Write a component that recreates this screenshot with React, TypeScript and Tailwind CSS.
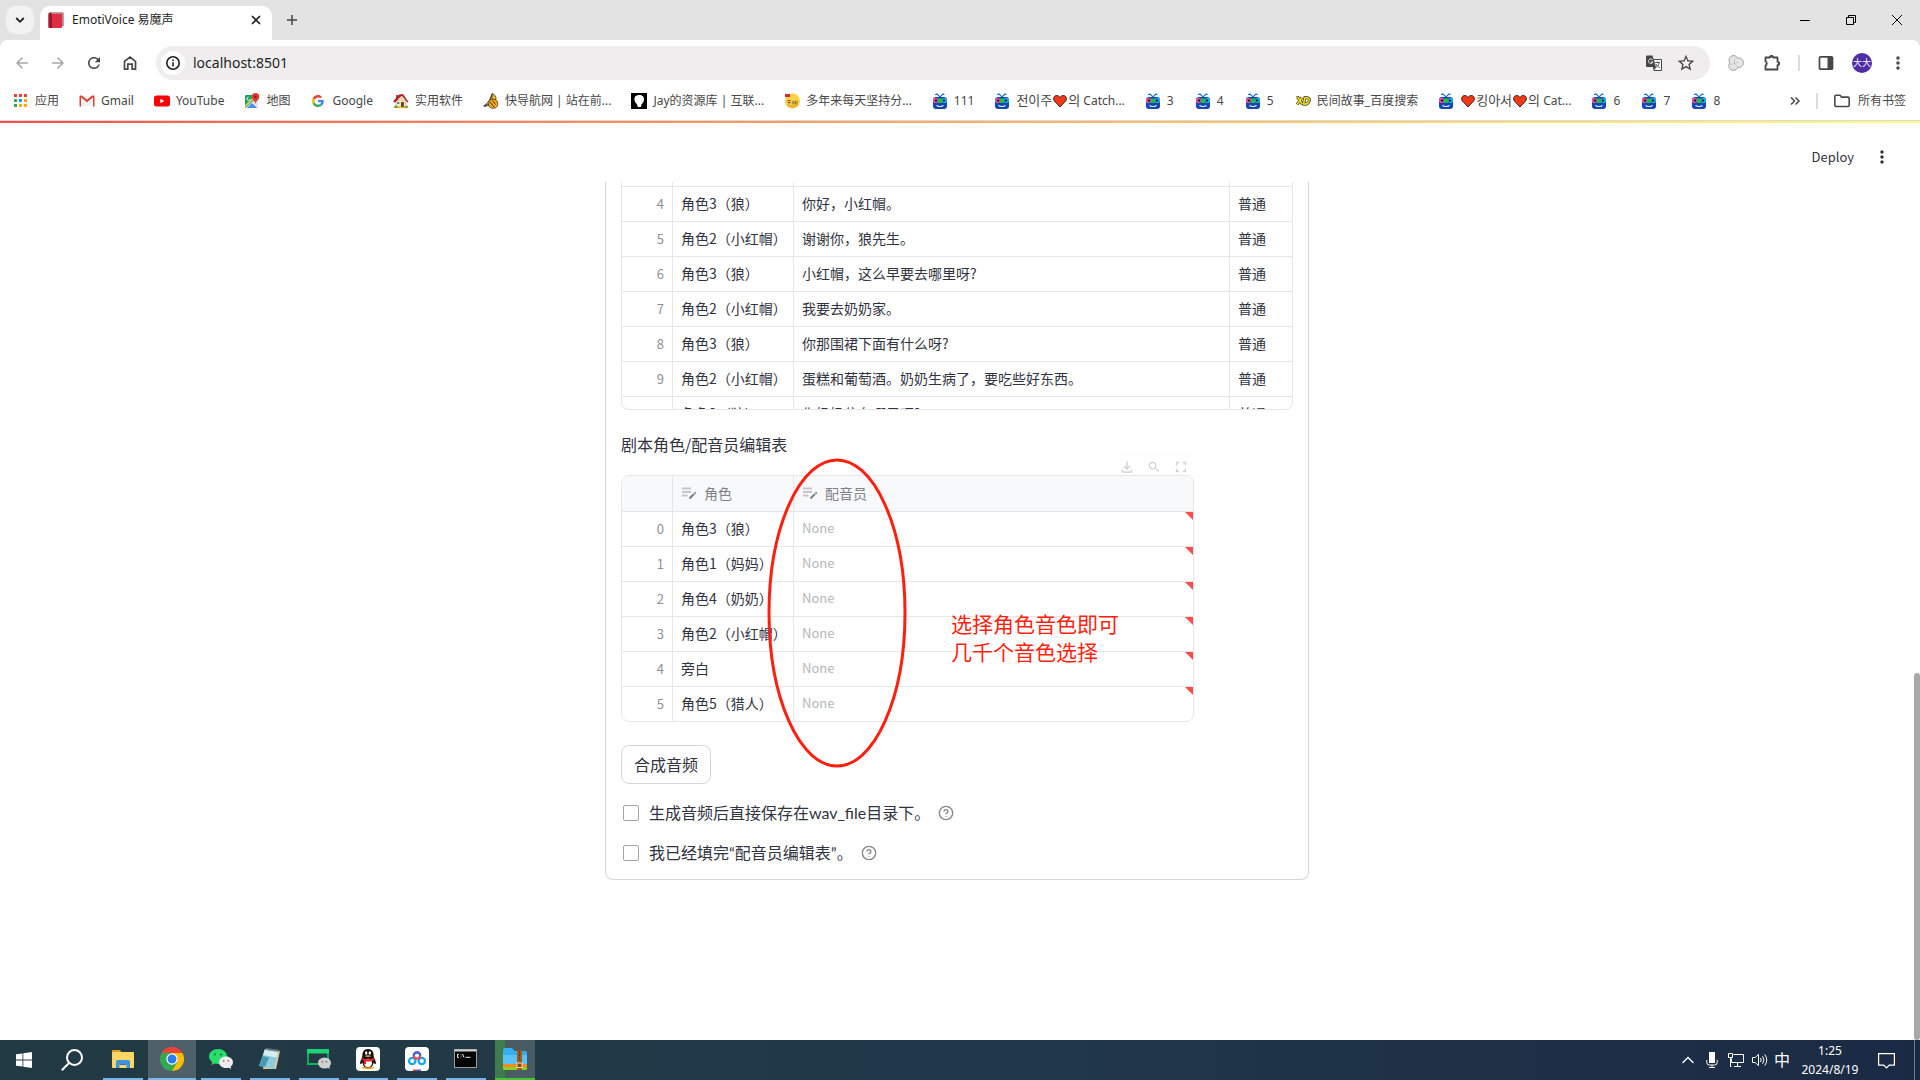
import type { ReactNode } from 'react';

type ScriptRow = { id: number; role: string; text: string; mood: string };
type IconProps = { className?: string };

const scriptRows: ScriptRow[] = [
  { id: 4, role: '角色3（狼）', text: '你好，小红帽。', mood: '普通' },
  { id: 5, role: '角色2（小红帽）', text: '谢谢你，狼先生。', mood: '普通' },
  { id: 6, role: '角色3（狼）', text: '小红帽，这么早要去哪里呀?', mood: '普通' },
  { id: 7, role: '角色2（小红帽）', text: '我要去奶奶家。', mood: '普通' },
  { id: 8, role: '角色3（狼）', text: '你那围裙下面有什么呀?', mood: '普通' },
  { id: 9, role: '角色2（小红帽）', text: '蛋糕和葡萄酒。奶奶生病了，要吃些好东西。', mood: '普通' },
  { id: 10, role: '角色3（狼）', text: '你奶奶住在哪里呀?', mood: '普通' },
];

const roles = ['角色3（狼）', '角色1（妈妈）', '角色4（奶奶）', '角色2（小红帽）', '旁白', '角色5（猎人）'];

/* ---------- bookmark icons ---------- */

function AppsIcon() {
  const colors = ['#ea4335', '#ea4335', '#ea4335', '#34a853', '#1a9bf0', '#f9ab00', '#34a853', '#f9ab00', '#f9ab00'];
  return (
    <svg viewBox="0 0 16 16" className="size-4 shrink-0">
      {colors.map((c, i) => (
        <rect key={i} x={1 + (i % 3) * 5} y={1 + Math.floor(i / 3) * 5} width="3" height="3" fill={c} />
      ))}
    </svg>
  );
}

function GmailIcon() {
  return (
    <svg viewBox="0 0 16 16" className="size-4 shrink-0">
      <path d="M2 3h12v10H2z" fill="#f1f1f1" />
      <path d="M2 3l6 5 6-5" fill="none" stroke="#d93f33" strokeWidth="2" />
      <path d="M.5 3.4C.5 2.6 1.4 2.200 2 2.700V13.500H.5zM15.500 3.400c0-.8-.9-1.200-1.500-.7V13.500h1.500z" fill="#d93f33" />
    </svg>
  );
}

function YouTubeIcon() {
  return (
    <svg viewBox="0 0 16 16" className="size-4 shrink-0">
      <rect y="2.500" width="16" height="11" rx="2.500" fill="#f00" />
      <path d="M6.300 5.700v4.600L10.400 8z" fill="#fff" />
    </svg>
  );
}

function MapsIcon() {
  return (
    <svg viewBox="0 0 16 16" className="size-4 shrink-0">
      <rect x="1" y="2" width="13" height="13" rx="1" fill="#1fa463" />
      <path d="M1.500 15L14 3v12z" fill="#e6e6e6" />
      <path d="M3 15l5-5 5 5z" fill="#4c8bf5" />
      <path d="M1 12.500L11.500 2h2L1 14.500z" fill="#fdd663" />
      <path d="M4.500 4.200a1.600 1.600 0 1 0 1.600 2" fill="none" stroke="#fff" strokeWidth=".9" />
      <path d="M11.500 0a3.800 3.800 0 0 0-3.700 3.900C7.800 6.500 11 7.500 11.500 11c.5-3.500 3.800-4.500 3.800-7.100A3.800 3.800 0 0 0 11.500 0z" fill="#e33b2e" />
      <circle cx="11.500" cy="3.800" r="1.300" fill="#7c1a14" />
    </svg>
  );
}

function GoogleIcon() {
  return (
    <svg viewBox="0 0 48 48" className="size-4 shrink-0 p-0.5">
      <path fill="#EA4335" d="M24 9.500c3.540 0 6.710 1.220 9.210 3.600l6.850-6.850C35.900 2.380 30.470 0 24 0 14.620 0 6.510 5.380 2.560 13.220l7.980 6.190C12.430 13.720 17.740 9.500 24 9.500z" />
      <path fill="#4285F4" d="M46.980 24.550c0-1.570-.15-3.090-.38-4.550H24v9.020h12.940c-.58 2.960-2.260 5.480-4.780 7.180l7.730 6c4.510-4.180 7.090-10.360 7.090-17.650z" />
      <path fill="#FBBC05" d="M10.530 28.590c-.48-1.450-.76-2.990-.76-4.590s.27-3.140.76-4.590l-7.980-6.190C.92 16.460 0 20.120 0 24c0 3.880.92 7.540 2.560 10.780l7.970-6.190z" />
      <path fill="#34A853" d="M24 48c6.480 0 11.930-2.130 15.890-5.810l-7.730-6c-2.150 1.450-4.920 2.300-8.160 2.300-6.260 0-11.570-4.220-13.470-9.910l-7.980 6.190C6.510 42.620 14.620 48 24 48z" />
    </svg>
  );
}

function HouseIcon() {
  return (
    <svg viewBox="0 0 16 16" className="size-4 shrink-0">
      <path d="M3 7h10v7H3z" fill="#f5e9c4" stroke="#a98d62" strokeWidth=".5" />
      <path d="M3 2h2v4H3z" fill="#8c5a3c" />
      <path d="M0 8.500L6 1.500l4-.5 5.500 8-1.200.6L9 3 2 9.500z" fill="#b3212f" />
      <path d="M5 6l3.500-3 3 3.500z" fill="#e3d3a8" />
      <rect x="8" y="9" width="3" height="5" fill="#7a4a2b" />
      <rect x="4" y="9" width="2.500" height="2" fill="#6d8ab5" />
      <path d="M1 15c0-3 3-3 4-1 1 1 7 1 9-2l1.500 3z" fill="#7ba324" />
      <path d="M5 14.300h6l1 1H4z" fill="#f2c12e" />
    </svg>
  );
}

function NavSiteIcon() {
  return (
    <svg viewBox="0 0 16 16" className="size-4 shrink-0">
      <path d="M9 .5c3 1 4.500 3.500 4 6L9 8z" fill="#f3b51d" stroke="#3b2a12" strokeWidth=".7" />
      <path d="M9 1L6.500 7l-5 6.500L6 12z" fill="#fff" stroke="#3b2a12" strokeWidth=".8" />
      <path d="M6 8c1.500-2 5-2.500 7.500-.5 2 2 1.500 6-1 7.300-3 1.200-6 .2-7-2.800z" fill="#f7a81b" stroke="#3b2a12" strokeWidth=".8" />
      <path d="M7 9l4 5M9.500 7.500l3 4" stroke="#3b2a12" strokeWidth=".9" />
      <path d="M0 13l4-3 1 2-3 2z" fill="#55504a" />
    </svg>
  );
}

function JayIcon() {
  return (
    <svg viewBox="0 0 16 16" className="size-4 shrink-0">
      <rect width="16" height="16" />
      <path d="M4 3.500C6 1.500 10 1.300 12 3.200c1.600 2 1.200 5-.3 6.800-.8 1-1.500 1.300-1.700 4H6.800c-.2-1.500-.5-2.500-1.600-3.600C3.500 8.800 2.800 5.500 4 3.500z" fill="#fff" />
    </svg>
  );
}

function YangzhouIcon() {
  return (
    <svg viewBox="0 0 16 16" className="size-4 shrink-0">
      <circle cx="8.500" cy="8" r="7.500" fill="#f9d24c" />
      <path d="M2 11a7.500 7.500 0 0 0 13 0c-3 2-9 2-13 0z" fill="#efa92a" />
      <rect x="1" y="1" width="5" height="3" fill="#e3262e" />
      <path d="M3.500 7.500h3.500M3.500 9.500h3.500M5 7v4.500M8.800 8v3.500M10 7.500v4M11.500 8v3.500M13 7.500v4" stroke="#7a4d10" strokeWidth=".7" />
    </svg>
  );
}

function RobotIcon() {
  return (
    <svg viewBox="0 0 16 16" className="size-4 shrink-0">
      <path d="M4.500.5L8 4l3.500-3.500M3 1.500h3M10.500 1.500h2" fill="none" stroke="#1f6fd0" strokeWidth="1.100" />
      <rect x="1" y="4" width="14" height="12" rx="3" fill="#1346b5" />
      <rect x="1" y="5" width="5" height="5" rx="2" fill="#ff4f9a" />
      <rect x="10" y="5" width="5" height="5" rx="2" fill="#17b6ee" />
      <rect x="6" y="5.500" width="4" height="4.500" fill="#1cc03c" />
      <circle cx="4" cy="7.500" r="1.200" fill="#171b45" />
      <circle cx="12" cy="7.500" r="1.200" fill="#171b45" />
      <path d="M4.500 12.500c1.800 1.300 5.200 1.300 7 0" fill="none" stroke="#fff" strokeWidth="1.100" />
    </svg>
  );
}

function XdIcon() {
  const d = 'M1.500 4.500h1.500l4 6.500M7 4.500L2 11.500M10 4.500L8.500 11c3 .5 5-.8 5.700-3.200C14.800 5.500 13 4.500 10 4.500z';
  return (
    <svg viewBox="0 0 16 16" className="size-4 shrink-0" fill="none">
      <path d={d} stroke="#3a381f" strokeWidth="3" />
      <path d={d} stroke="#f5e11a" strokeWidth="1.500" />
    </svg>
  );
}

function Heart() {
  return (
    <svg viewBox="0 0 14 14" className="mx-px inline size-3.5 align-[-3px]">
      <path d="M7 13L1.400 7C-.4 4.500 1 1.500 3.700 1.500 5.300 1.500 6.400 2.400 7 3.700c.6-1.300 1.700-2.200 3.300-2.200 2.700 0 4.100 3 2.300 5.500z" fill="#f03a17" stroke="#2a1512" strokeWidth=".9" />
    </svg>
  );
}

function Bookmark({ icon, children }: { icon: ReactNode; children: ReactNode }) {
  return (
    <a href="#" className="flex h-7 min-w-[50px] shrink-0 items-center gap-1.5 px-2.5 whitespace-nowrap">
      {icon}
      <span>{children}</span>
    </a>
  );
}

/* ---------- toolbar icons ---------- */

function MaterialIcon({ d, className }: IconProps & { d: string }) {
  return (
    <svg viewBox="0 0 24 24" className={className} fill="currentColor">
      <path d={d} />
    </svg>
  );
}

const ARROW_BACK = 'M20 11H7.830l5.590-5.590L12 4l-8 8 8 8 1.410-1.410L7.830 13H20v-2z';
const REFRESH =
  'M17.650 6.350C16.200 4.900 14.210 4 12 4c-4.420 0-7.990 3.580-7.990 8s3.570 8 7.990 8c3.730 0 6.840-2.550 7.730-6h-2.080c-.82 2.330-3.040 4-5.650 4-3.310 0-6-2.690-6-6s2.690-6 6-6c1.660 0 3.140.69 4.220 1.780L13 11h7V4l-2.350 2.350z';
const STAR =
  'M22 9.240l-7.190-.62L12 2 9.190 8.630 2 9.240l5.460 4.730L5.820 21 12 17.270 18.180 21l-1.630-7.030L22 9.240zM12 15.400l-3.760 2.270 1-4.280-3.320-2.880 4.380-.38L12 6.100l1.710 4.040 4.380.38-3.320 2.880 1 4.280L12 15.400z';
const SEARCH =
  'M15.500 14h-.79l-.28-.27C15.410 12.590 16 11.110 16 9.500 16 5.910 13.090 3 9.500 3S3 5.910 3 9.500 5.910 16 9.500 16c1.610 0 3.090-.59 4.230-1.570l.27.28v.79l5 4.990L20.490 19l-4.990-5zm-6 0C7.010 14 5 11.990 5 9.500S7.010 5 9.500 5 14 7.010 14 9.500 11.990 14 9.500 14z';
const DOTS =
  'M12 8c1.100 0 2-.9 2-2s-.9-2-2-2-2 .9-2 2 .9 2 2 2zm0 2c-1.100 0-2 .9-2 2s.9 2 2 2 2-.9 2-2-.9-2-2-2zm0 6c-1.100 0-2 .9-2 2s.9 2 2 2 2-.9 2-2-.9-2-2-2z';

function ToolButton({ label, children }: { label: string; children: ReactNode }) {
  return (
    <button type="button" aria-label={label} className="flex size-9 shrink-0 items-center justify-center text-[#474747]">
      {children}
    </button>
  );
}

function TabStrip() {
  return (
    <div className="flex h-10 items-end bg-[#e3e3e3]">
      <button type="button" aria-label="搜索标签页" className="mb-1.5 ml-1.5 flex size-7 items-center justify-center rounded-[10px] bg-[#f2f2f2]">
        <svg viewBox="0 0 10 10" className="size-2.5" fill="none" stroke="#1f1f1f" strokeWidth="1.800">
          <path d="M1.200 3L5 6.800 8.800 3" />
        </svg>
      </button>
      <div className="ml-1.5 flex h-[34px] w-[232px] items-center rounded-t-[10px] bg-white pr-2 pb-1.5 pl-2">
        <svg viewBox="0 0 16 16" className="size-4 shrink-0">
          <path d="M2 .5h12.500q1 0 1 1V14H14V2.500H2z" fill="#9b3b43" />
          <path d="M2.500 1.500H14.500v12h-1.500z" fill="#d9d2d0" />
          <rect x=".5" y="2" width="13.500" height="14" rx="1" fill="#dd2e44" />
          <path d="M.5 1.500Q1 .5 2.500.5L4 2v14H1.500q-1 0-1-1z" fill="#a0182d" />
        </svg>
        <span className="ml-2 flex-1 truncate text-xs text-[#1f1f1f]">EmotiVoice 易魔声</span>
        <button type="button" aria-label="关闭标签页" className="flex size-4 items-center justify-center">
          <svg viewBox="0 0 10 10" className="size-2.5" stroke="#1f1f1f" strokeWidth="1.600">
            <path d="M1 1l8 8M9 1L1 9" />
          </svg>
        </button>
      </div>
      <button type="button" aria-label="新标签页" className="mb-1.5 ml-1.5 flex size-7 items-center justify-center">
        <svg viewBox="0 0 10 10" className="size-2.5" stroke="#474747" strokeWidth="1.500">
          <path d="M5 0v10M0 5h10" />
        </svg>
      </button>
      <div className="ml-auto flex h-10">
        <button type="button" aria-label="最小化" className="flex w-[46px] items-center justify-center">
          <svg viewBox="0 0 10 10" className="size-2.5" stroke="#000">
            <path d="M0 5.500h10" />
          </svg>
        </button>
        <button type="button" aria-label="还原" className="flex w-[46px] items-center justify-center">
          <svg viewBox="0 0 10 10" className="size-2.5" fill="none" stroke="#000">
            <path d="M.5 2.500h7v7h-7zM2.500 2.500v-2h7v7h-2" />
          </svg>
        </button>
        <button type="button" aria-label="关闭" className="flex w-[46px] items-center justify-center">
          <svg viewBox="0 0 10 10" className="size-2.5" stroke="#000">
            <path d="M0 0l10 10M10 0L0 10" />
          </svg>
        </button>
      </div>
    </div>
  );
}

function Toolbar() {
  return (
    <div className="bg-[#e3e3e3]">
      <div className="flex h-[46px] items-center rounded-t-lg bg-white px-1">
        <ToolButton label="后退">
          <MaterialIcon d={ARROW_BACK} className="size-[18px] text-[#a8a8a8]" />
        </ToolButton>
        <ToolButton label="前进">
          <MaterialIcon d={ARROW_BACK} className="size-[18px] rotate-180 text-[#a8a8a8]" />
        </ToolButton>
        <ToolButton label="重新加载">
          <MaterialIcon d={REFRESH} className="size-[18px]" />
        </ToolButton>
        <ToolButton label="主页">
          <svg viewBox="0 0 16 16" className="size-4" fill="none" stroke="currentColor" strokeWidth="1.700">
            <path d="M2.500 6.300L8 2l5.500 4.300V14.200h-3.300V9.200H5.800v5H2.500z" />
          </svg>
        </ToolButton>
        <div className="mx-2 flex h-[34px] flex-1 items-center rounded-full bg-[#efedee] pr-3.5 pl-[5px]">
          <span className="flex size-6 items-center justify-center rounded-full bg-white">
            <svg viewBox="0 0 16 16" className="size-4" fill="none" stroke="#1f1f1f">
              <circle cx="8" cy="8" r="6.200" strokeWidth="1.600" />
              <path d="M8 7.200v4M8 4.500v1.600" strokeWidth="1.600" />
            </svg>
          </span>
          <input aria-label="地址栏" defaultValue="localhost:8501" className="ml-2 flex-1 bg-transparent text-sm text-[#1f1f1f] outline-none" />
          <button type="button" aria-label="翻译此页" className="mr-3.5">
            <svg viewBox="0 0 16 16" className="size-4" fill="none">
              <path d="M6 4.500h9.500v11H8z" fill="#fff" stroke="#474747" />
              <path d="M0 1.500Q0 .5 1 .5h5.500l3.500 11.500H1q-1 0-1-1z" fill="#474747" />
              <path d="M6.800 5A2.300 2.300 0 1 0 7 7H4.800" stroke="#fff" strokeWidth=".9" />
              <path d="M9 7.500h5M11.500 6.500v1M13.200 7.500c-.5 2.500-2 4-3.200 4.800M10 9c1 2 2.300 3 3.700 3.600" stroke="#474747" strokeWidth=".9" />
              <path d="M7.500 12h2.500l-1 3z" fill="#474747" />
            </svg>
          </button>
          <button type="button" aria-label="为此页添加书签" className="text-[#474747]">
            <MaterialIcon d={STAR} className="size-5" />
          </button>
        </div>
        <ToolButton label="扩展">
          <svg viewBox="0 0 16 16" className="size-4" fill="#e4e4e4" stroke="#8b8b8b" strokeWidth=".8">
            <path d="M5.500.5c2 0 3 1 3.800 2.400 1.500 0 2.800 0 4 .8 2.800 1.800 2.800 6 .3 7.800-1.200.9-2.600 1-3.900.9-.8 1.700-2.200 3-4.200 3-3.500 0-5.300-3-4.500-6C1.300 8.500 1.700 8 1.500 7 0 4 2.500.5 5.500.5z" />
            <path d="M6.500 8.500V4M6.500 8.500l4-1.500M6.500 8.500l3.200 3.200M6.500 8.500L2 9.500" fill="none" stroke="#c2c2c2" />
          </svg>
        </ToolButton>
        <ToolButton label="扩展程序">
          <svg viewBox="0 0 18 18" className="size-[18px]" fill="none" stroke="currentColor" strokeWidth="1.800">
            <path d="M2.500 3.500h4.300a1.700 1.700 0 0 1 3.400 0h4.300v4.300a1.700 1.700 0 0 1 0 3.400v4.300h-12v-4a2.200 2.200 0 0 0 0-4z" strokeLinejoin="round" />
            <path d="M7 2.500h3M15.800 8v3" />
          </svg>
        </ToolButton>
        <div className="mx-2 h-4 w-0.5 bg-[#dcdcdc]" />
        <ToolButton label="侧边栏">
          <svg viewBox="0 0 16 16" className="size-4" fill="none" stroke="currentColor" strokeWidth="1.700">
            <rect x="1.500" y="1.800" width="13" height="12.400" rx="1" />
            <path d="M9.500 2h5v12h-5z" fill="currentColor" stroke="none" />
          </svg>
        </ToolButton>
        <ToolButton label="账号">
          <span className="flex size-5 items-center justify-center rounded-full bg-[#512da8] text-[9px] text-white">大大</span>
        </ToolButton>
        <ToolButton label="自定义及控制">
          <MaterialIcon d={DOTS} className="size-5" />
        </ToolButton>
      </div>
    </div>
  );
}

function BookmarksBar() {
  return (
    <div className="flex h-[34px] items-center bg-white pb-1 text-xs text-[#474747]">
      <nav aria-label="书签栏" className="flex flex-1 items-center overflow-hidden pl-[3px]">
        <Bookmark icon={<AppsIcon />}>应用</Bookmark>
        <Bookmark icon={<GmailIcon />}>Gmail</Bookmark>
        <Bookmark icon={<YouTubeIcon />}>YouTube</Bookmark>
        <Bookmark icon={<MapsIcon />}>地图</Bookmark>
        <Bookmark icon={<GoogleIcon />}>Google</Bookmark>
        <Bookmark icon={<HouseIcon />}>实用软件</Bookmark>
        <Bookmark icon={<NavSiteIcon />}>快导航网 | 站在前...</Bookmark>
        <Bookmark icon={<JayIcon />}>Jay的资源库 | 互联...</Bookmark>
        <Bookmark icon={<YangzhouIcon />}>多年来每天坚持分...</Bookmark>
        <Bookmark icon={<RobotIcon />}>111</Bookmark>
        <Bookmark icon={<RobotIcon />}>
          <span className="text-[13px]">전이주</span>
          <Heart />
          <span className="text-[13px]">의</span> Catch...
        </Bookmark>
        <Bookmark icon={<RobotIcon />}>3</Bookmark>
        <Bookmark icon={<RobotIcon />}>4</Bookmark>
        <Bookmark icon={<RobotIcon />}>5</Bookmark>
        <Bookmark icon={<XdIcon />}>民间故事_百度搜索</Bookmark>
        <Bookmark icon={<RobotIcon />}>
          <Heart />
          <span className="text-[13px]">킹아서</span>
          <Heart />
          <span className="text-[13px]">의</span> Cat...
        </Bookmark>
        <Bookmark icon={<RobotIcon />}>6</Bookmark>
        <Bookmark icon={<RobotIcon />}>7</Bookmark>
        <Bookmark icon={<RobotIcon />}>8</Bookmark>
      </nav>
      <button type="button" aria-label="更多书签" className="mr-3 p-1">
        <svg viewBox="0 0 10 8" className="h-2 w-2.5" fill="none" stroke="#474747" strokeWidth="1.500">
          <path d="M1 .5L4.500 4 1 7.500M5.500.5L9 4 5.500 7.500" />
        </svg>
      </button>
      <div className="h-4 w-0.5 bg-[#dcdcdc]" />
      <a href="#" className="flex items-center gap-2 pr-3.5 pl-4">
        <svg viewBox="0 0 16 14" className="h-3.5 w-4" fill="none" stroke="#474747" strokeWidth="1.600">
          <path d="M.8 2.500q0-1.200 1.200-1.200h4l1.600 1.800H14q1.200 0 1.200 1.200v7q0 1.200-1.200 1.200H2q-1.200 0-1.200-1.200z" />
        </svg>
        所有书签
      </a>
    </div>
  );
}

/* ---------- page ---------- */

function ColumnIcon() {
  return (
    <svg viewBox="0 0 16 16" className="size-4 shrink-0" fill="none">
      <path d="M1 3.500h9M1 7h9M1 10.500h5.500" stroke="#c3c5ca" strokeWidth="1.800" />
      <path d="M8.500 13.500l4.500-4.500" stroke="#7c7e86" strokeWidth="1.900" />
      <path d="M13.500 8.500l1.200-1.200" stroke="#7c7e86" strokeWidth="1.900" />
    </svg>
  );
}

const cell = 'h-[35px] border-b border-[#e6e6e9] px-2 pt-0 pb-0.5 whitespace-nowrap';
const indexCell = 'h-[35px] border-r border-b border-[#e6e6e9] px-2 py-0 text-right text-[13px] font-normal text-[#8e9097]';

function ScriptTable() {
  return (
    <div className="h-[228px] overflow-hidden rounded-b-lg border border-t-0 border-[#e6e6e9]">
      <table className="w-full table-fixed border-separate border-spacing-0 text-sm">
        <colgroup>
          <col className="w-[51px]" />
          <col className="w-[121px]" />
          <col />
          <col className="w-[62px]" />
        </colgroup>
        <tbody>
          <tr aria-hidden="true">
            <td className="h-[5px] border-r border-b border-[#e6e6e9] p-0" />
            <td className="h-[5px] border-r border-b border-[#e6e6e9] p-0" />
            <td className="h-[5px] border-r border-b border-[#e6e6e9] p-0" />
            <td className="h-[5px] border-b border-[#e6e6e9] p-0" />
          </tr>
          {scriptRows.map((row) => (
            <tr key={row.id}>
              <th scope="row" className={indexCell}>{row.id}</th>
              <td className={`${cell} border-r`}>{row.role}</td>
              <td className={`${cell} border-r`}>{row.text}</td>
              <td className={cell}>{row.mood}</td>
            </tr>
          ))}
        </tbody>
      </table>
    </div>
  );
}

function TableToolbar() {
  return (
    <div className="ml-auto flex h-[19px] w-20 items-end justify-between rounded-t-lg px-1.5 pb-px text-[#cfd0d3] shadow-[0_-1px_6px_rgba(0,0,0,0.02)]">
      <button type="button" aria-label="下载">
        <svg viewBox="0 0 14 14" className="size-3.5" fill="none" stroke="currentColor" strokeWidth="1.300">
          <path d="M7 1.500V9M4 6l3 3 3-3M2.500 9.500v2.700h9V9.500" />
        </svg>
      </button>
      <button type="button" aria-label="搜索">
        <MaterialIcon d={SEARCH} className="size-3.5" />
      </button>
      <button type="button" aria-label="全屏">
        <svg viewBox="0 0 14 14" className="size-3.5" fill="none" stroke="currentColor" strokeWidth="1.300">
          <path d="M2.500 5.500v-3H5M9 2.500h2.500v3M11.500 8.500v3H9M5 11.500H2.500v-3" />
        </svg>
      </button>
    </div>
  );
}

function RoleTable() {
  return (
    <div className="overflow-hidden rounded-lg border border-[#e6e6e9]">
      <table className="w-full table-fixed border-separate border-spacing-0 text-sm">
        <colgroup>
          <col className="w-[51px]" />
          <col className="w-[121px]" />
          <col />
        </colgroup>
        <thead className="bg-[#f8f9fb] text-left text-[#7f8189]">
          <tr>
            <th className="h-9 border-r border-b border-[#e6e6e9] p-0" />
            <th scope="col" className="h-9 border-r border-b border-[#e6e6e9] px-2 pt-0 pb-0.5 font-normal">
              <span className="flex items-center gap-[7px]">
                <ColumnIcon />
                角色
              </span>
            </th>
            <th scope="col" className="h-9 border-b border-[#e6e6e9] px-2 pt-0 pb-0.5 font-normal">
              <span className="flex items-center gap-[7px]">
                <ColumnIcon />
                配音员
              </span>
            </th>
          </tr>
        </thead>
        <tbody>
          {roles.map((role, i) => (
            <tr key={role} className="last:*:h-[34px] last:*:border-b-0">
              <th scope="row" className={indexCell}>{i}</th>
              <td className={`${cell} border-r`}>{role}</td>
              <td className={`${cell} relative text-[13px] text-[#b5b7bb]`}>
                None
                <svg viewBox="0 0 8 8" className="absolute top-0 right-0 size-2">
                  <path d="M0 0h8v8z" fill="#ff4b4b" />
                </svg>
              </td>
            </tr>
          ))}
        </tbody>
      </table>
    </div>
  );
}

// 手绘标注：椭圆 + 说明文字
function Annotation() {
  return (
    <div className="pointer-events-none absolute top-[25px] left-[146px] flex items-center text-[#ff1f0f]">
      <svg viewBox="0 0 140 312" className="h-[312px] w-[140px]" fill="none" stroke="currentColor" strokeWidth="3">
        <ellipse cx="70" cy="156" rx="68" ry="153" />
      </svg>
      <p className="mt-12 ml-11 text-[21px] leading-7 whitespace-nowrap">
        选择角色音色即可
        <br />
        几千个音色选择
      </p>
    </div>
  );
}

function CheckRow({ id, children }: { id: string; children: ReactNode }) {
  return (
    <div className="flex h-6 items-center pl-0.5 font-['Lato','Noto_Sans_CJK_SC',sans-serif]">
      <input id={id} type="checkbox" className="size-4 appearance-none rounded-xs border border-[#a3a4a9] bg-white" />
      <label htmlFor={id} className="ml-2.5">{children}</label>
      <svg viewBox="0 0 24 24" className="ml-2 size-4" fill="none" stroke="#83848c" strokeWidth="2" strokeLinecap="round">
        <circle cx="12" cy="12" r="10" />
        <path d="M9.090 9a3 3 0 0 1 5.830 1c0 2-3 3-3 3M12 17h.01" />
      </svg>
    </div>
  );
}

function StreamlitPage() {
  return (
    <div className="flex min-h-0 flex-1 bg-white font-['Noto_Sans_CJK_SC',sans-serif] text-[#31333f]">
      <main className="flex min-w-0 flex-1 flex-col">
        <header className="flex h-[59px] shrink-0 items-center justify-end gap-4 pt-2 pr-5">
          <button type="button" className="text-[13px]">Deploy</button>
          <button type="button" aria-label="菜单" className="flex w-6 justify-center">
            <MaterialIcon d={DOTS} className="size-5" />
          </button>
        </header>
        <div className="mx-auto w-full max-w-[704px] rounded-b-lg border border-t-0 border-[#d6d6d9] px-[15px] pb-3.5">
          <ScriptTable />
          <section className="relative mt-[22px]">
            <h2 className="h-6 text-base leading-6">剧本角色/配音员编辑表</h2>
            <div className="max-w-[573px]">
              <TableToolbar />
              <RoleTable />
            </div>
            <Annotation />
          </section>
          <button type="button" className="mt-[23px] h-[39px] rounded-lg border border-[#d6d6d9] px-3 pb-0.5 text-base">合成音频</button>
          <div className="mt-[17px] flex flex-col gap-4">
            <CheckRow id="save-wav">生成音频后直接保存在wav_file目录下。</CheckRow>
            <CheckRow id="filled">我已经填完“配音员编辑表”。</CheckRow>
          </div>
        </div>
      </main>
      <div className="flex w-1.5 flex-col justify-end">
        <div className="h-2/5 rounded-full bg-[#a8a8ab]" />
      </div>
    </div>
  );
}

/* ---------- taskbar ---------- */

function TaskItem({ label, active, children }: { label: string; active?: boolean; children: ReactNode }) {
  return (
    <button
      type="button"
      aria-label={label}
      className={`flex h-10 w-12 flex-col items-center ${active ? 'bg-white/20' : ''}`}
    >
      <span className="flex flex-1 items-center">{children}</span>
      <span className={`h-0.5 bg-[#76b9ed] ${active ? 'w-full' : 'w-10'}`} />
    </button>
  );
}

function Taskbar() {
  return (
    <footer className="flex h-10 shrink-0 items-center bg-linear-to-r from-[#223a43] via-[#21384a] to-[#1b2a44] text-white">
      <button type="button" aria-label="开始" className="flex h-10 w-12 items-center justify-center">
        <svg viewBox="0 0 16 16" className="size-4" fill="#fff">
          <path d="M0 2.300L6.500 1.400v6.200H0zM7.300 1.300L16 0v7.600H7.300zM0 8.400h6.500v6.200L0 13.700zM7.300 8.400H16V16l-8.700-1.300z" />
        </svg>
      </button>
      <button type="button" aria-label="搜索" className="mr-[3px] flex h-10 w-12 items-center justify-center">
        <svg viewBox="0 0 22 22" className="size-[22px]" fill="none" stroke="#fff" strokeWidth="2">
          <circle cx="13.500" cy="8.500" r="7.500" />
          <path d="M8 14L.8 21.200" />
        </svg>
      </button>
      <div className="flex gap-px">
        <TaskItem label="文件资源管理器">
          <svg viewBox="0 0 22 18" className="h-[18px] w-[22px]">
            <path d="M0 1q0-1 1-1h7l1.500 2.500H0z" fill="#e1a116" />
            <rect y="2" width="22" height="16" rx=".8" fill="#fdd765" />
            <path d="M4 18v-6q0-2 2-2h10q2 0 2 2v6h-3.500v-4h-7v4z" fill="#3d93dd" />
            <path d="M7.500 14h7v1h-7z" fill="#2a77be" />
          </svg>
        </TaskItem>
        <TaskItem label="Chrome" active>
          <svg viewBox="0 0 24 24" className="size-6">
            <path d="M12 12L1.600 6A12 12 0 0 1 22.400 6z" fill="#ea4335" />
            <path d="M12 12l10.400-6A12 12 0 0 1 12 24z" fill="#fbbc04" />
            <path d="M1.600 6A12 12 0 0 0 12 24l5.200-9L12 12z" fill="#34a853" />
            <path d="M12 6h10.400L17.200 15z" fill="#fbbc04" />
            <path d="M1.600 6L6.800 15 12 6z" fill="#34a853" />
            <path d="M1.600 6A12 12 0 0 1 22.400 6H12z" fill="#ea4335" />
            <circle cx="12" cy="12" r="5.700" fill="#fff" />
            <circle cx="12" cy="12" r="4.500" fill="#2b7cf0" />
          </svg>
        </TaskItem>
        <TaskItem label="微信">
          <svg viewBox="0 0 24 20" className="h-5 w-6">
            <path d="M9 0c5 0 9 3.200 9 7.500S14 15 9 15c-1.200 0-2.200-.2-3.200-.5L2.500 16l.7-3C1.200 11.500 0 9.700 0 7.500 0 3.200 4 0 9 0z" fill="#2adc6c" />
            <circle cx="6" cy="5.500" r="1.100" fill="#157a3c" />
            <circle cx="12" cy="5.500" r="1.100" fill="#157a3c" />
            <path d="M17 7.500c4 0 7 2.600 7 5.800 0 1.800-.9 3.300-2.300 4.300l.5 2.200-2.600-1.100c-.8.300-1.700.4-2.600.4-4 0-7-2.600-7-5.800s3-5.800 7-5.800z" fill="#ececec" />
            <circle cx="14.700" cy="11.800" r=".9" fill="#777" />
            <circle cx="19.300" cy="11.800" r=".9" fill="#777" />
          </svg>
        </TaskItem>
        <TaskItem label="记事本">
          <svg viewBox="0 0 24 24" className="size-6">
            <path d="M8 2l14 2-4 18H5z" fill="#d9c9a0" />
            <path d="M7 2l13 2-4 17.500L1 19z" fill="#8cc9dc" />
            <path d="M7 2l13 2-1.500 6.500L5 8z" fill="#d4eef4" />
            <path d="M5 9l6 1.500-4 9.300L1 19z" fill="#4899b4" />
            <path d="M8 1l13 2-.3 2L7.500 3z" fill="#737f83" />
          </svg>
        </TaskItem>
        <TaskItem label="微信窗口">
          <svg viewBox="0 0 24 20" className="h-5 w-6">
            <path d="M1 1h20v14H1z" fill="none" stroke="#15b35a" strokeWidth="1.800" />
            <path d="M0 0h22v4.500H0z" fill="#20d174" />
            <ellipse cx="17.500" cy="14" rx="6.500" ry="5.500" fill="#cfcfcf" />
            <path d="M20 18l3 2-1-4z" fill="#cfcfcf" />
            <circle cx="15.500" cy="12.800" r=".9" fill="#777" />
            <circle cx="19.500" cy="12.800" r=".9" fill="#777" />
          </svg>
        </TaskItem>
        <TaskItem label="QQ">
          <svg viewBox="0 0 24 24" className="size-6">
            <rect width="24" height="24" rx="4" fill="#fff" />
            <ellipse cx="12" cy="20.700" rx="6" ry="1.600" fill="#f7a71b" />
            <path d="M12 2c-4 0-5.600 3-5.600 6 0 1.500-.3 2.500-1.200 4.200-1.200 2.300-1.400 4.500-.7 4.900.6.3 1.500-1 1.900-1.600.3 3 2.200 5.200 5.600 5.200s5.300-2.200 5.600-5.200c.4.6 1.300 1.900 1.900 1.600.7-.4.500-2.600-.7-4.900-.9-1.700-1.200-2.700-1.200-4.200 0-3-1.600-6-5.600-6z" fill="#111" />
            <ellipse cx="12" cy="16" rx="4" ry="4.300" fill="#fff" />
            <ellipse cx="10.200" cy="6" rx="1.200" ry="1.700" fill="#fff" />
            <ellipse cx="13.800" cy="6" rx="1.200" ry="1.700" fill="#fff" />
            <path d="M8.500 9q3.500-1.500 7 0-3.500 2-7 0z" fill="#f7a71b" />
            <path d="M6 11c4 1.800 8 1.800 12 0l.5 2c-3 1.500-6 1.700-8.500 1.300v3H7.700v-3.800L5.500 13z" fill="#e8212b" />
          </svg>
        </TaskItem>
        <TaskItem label="百度网盘">
          <svg viewBox="0 0 24 24" className="size-6" fill="none">
            <rect width="24" height="24" rx="4" fill="#fff" />
            <circle cx="7.200" cy="14" r="3.200" stroke="#1aa7ea" strokeWidth="2.300" />
            <circle cx="16.800" cy="14" r="3.200" stroke="#1aa7ea" strokeWidth="2.300" />
            <circle cx="12" cy="8.500" r="3.200" stroke="#f04452" strokeWidth="2.300" />
            <path d="M8.800 8.500a3.200 3.200 0 0 1 6.400 0" stroke="#2c6cf0" strokeWidth="2.300" />
            <path d="M8 22.500h4V24H8z" fill="#e5323e" />
            <path d="M12 22.500h4V24h-4z" fill="#2c6cf0" />
          </svg>
        </TaskItem>
        <TaskItem label="命令提示符">
          <svg viewBox="0 0 24 20" className="h-5 w-6" fill="none">
            <rect x=".5" y=".5" width="22" height="18" fill="#050505" stroke="#9a9a9a" />
            <path d="M.5.500h22v2H.5z" fill="#d0d0d0" />
            <path d="M5 5.500H3.500v3H5M7 5.500v.8M7 7.500v.8M8.500 5l1.500 3.500M11.500 8.300h5" stroke="#e8e8e8" />
          </svg>
        </TaskItem>
        <button type="button" aria-label="压缩软件" className="ml-1 flex h-10 w-10 flex-col items-center bg-linear-to-r from-[#3f7c4d] from-25% to-[#4a5c63] to-25%">
          <span className="flex flex-1 items-center">
            <svg viewBox="0 0 24 24" className="size-6">
              <path d="M0 3q0-2 2-2h7l2.500 3H22q2 0 2 2v12H0z" fill="#35aef2" />
              <path d="M0 8h24v9H0z" fill="#5ac2fa" />
              <path d="M0 17h24v3H0z" fill="#f58a1f" />
              <path d="M0 20h24v1.500q0 1.500-1.500 1.500h-21Q0 23 0 21.500z" fill="#8ad021" />
              <rect x="14" y="3" width="5" height="20" fill="#a2571b" />
              <path d="M16.500 4v10" stroke="#5d2d08" strokeDasharray="1 1" />
              <rect x="14" y="16" width="5" height="4.500" fill="#8a4512" stroke="#f6dfae" />
            </svg>
          </span>
          <span className="h-0.5 w-full bg-[#41c932]" />
        </button>
      </div>
      <div className="ml-auto flex items-center">
        <button type="button" aria-label="显示隐藏的图标" className="flex w-6 justify-center">
          <svg viewBox="0 0 12 8" className="h-2 w-3" fill="none" stroke="#fff" strokeWidth="1.300">
            <path d="M.5 7L6 1.500 11.500 7" />
          </svg>
        </button>
        <button type="button" aria-label="麦克风" className="flex w-6 justify-center">
          <svg viewBox="0 0 12 16" className="h-4 w-3" fill="none" stroke="#fff">
            <rect x="3" y="0" width="6" height="11" rx=".5" fill="#fff" stroke="none" />
            <path d="M.8 8v2.500q0 2.500 2.500 2.500h5.400q2.500 0 2.500-2.500V8M6 13v2.500M3 15.500h6" />
          </svg>
        </button>
        <button type="button" aria-label="网络" className="flex w-6 justify-center">
          <svg viewBox="0 0 16 14" className="h-3.5 w-4" fill="none" stroke="#fff">
            <path d="M5.500 1.500h10v8h-12v-4M9.500 9.500v3.500M6 13.500h7M.5.500h4v4h-4zM2.500 4.500v9h1" />
          </svg>
        </button>
        <button type="button" aria-label="音量" className="flex w-6 justify-center">
          <svg viewBox="0 0 16 14" className="h-3.5 w-4" fill="none" stroke="#fff">
            <path d="M.5 4.500h2.700L6.500 1.300v11.400L3.200 9.500H.5zM8.500 5q1.400 2 0 4M10.600 3.300q2.700 3.700 0 7.400M12.800 1.500q4 5.500 0 11" />
          </svg>
        </button>
        <button type="button" className="w-5 text-base leading-5">中</button>
        <time className="ml-px w-[74px] text-center text-xs leading-[19px]">
          1:25
          <br />
          2024/8/19
        </time>
        <button type="button" aria-label="通知" className="flex h-10 w-[30px] items-center justify-end pr-0.5">
          <svg viewBox="0 0 17 17" className="size-[17px]" fill="none" stroke="#fff" strokeWidth="1.200">
            <path d="M.6 1.600h15.800v11.500h-5.200L8.500 15.800 5.800 13.100H.6z" />
          </svg>
        </button>
        <div className="ml-[17px] h-10 w-[6px] border-l border-white/40" />
      </div>
    </footer>
  );
}

export default function App() {
  return (
    <div className="flex h-screen flex-col overflow-hidden bg-white font-['Noto_Sans','Noto_Sans_CJK_SC','Noto_Sans_CJK_KR',sans-serif]">
      <TabStrip />
      <Toolbar />
      <BookmarksBar />
      <div className="h-px shrink-0 bg-[#d9d9d9]" />
      <div className="h-0.5 shrink-0 bg-linear-to-r from-[#ff4b4b] to-[#fffd80]" />
      <StreamlitPage />
      <Taskbar />
    </div>
  );
}
